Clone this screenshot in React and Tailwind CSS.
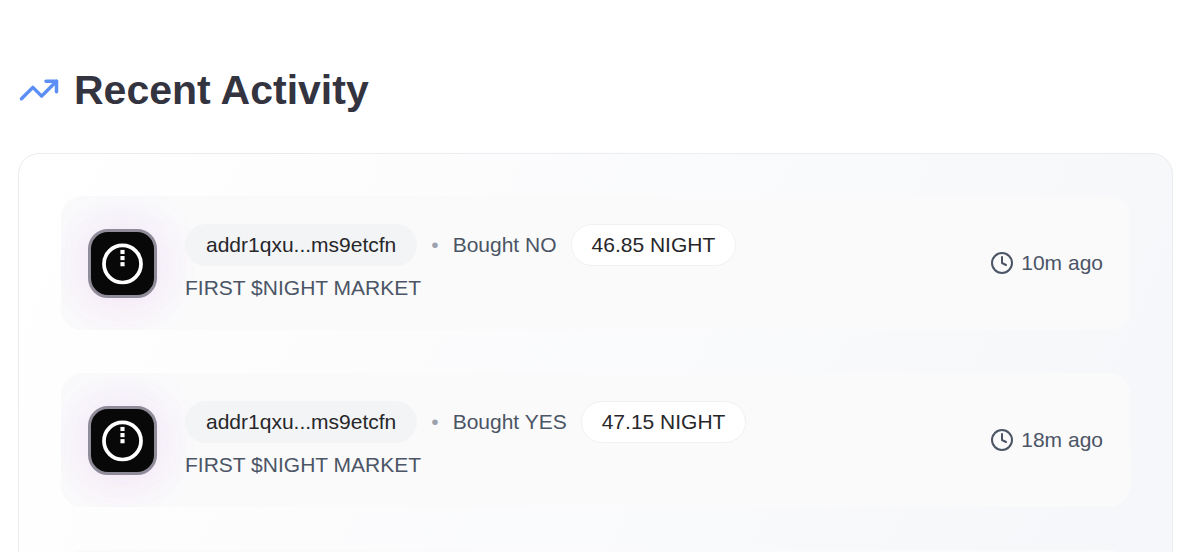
import React from 'react';
import { Clock, TrendingUp } from 'lucide-react';

const activities = [
  { id: 1, address: 'addr1qxu...ms9etcfn', action: 'Bought NO', amount: '46.85 NIGHT', market: 'FIRST $NIGHT MARKET', time: '10m ago' },
  { id: 2, address: 'addr1qxu...ms9etcfn', action: 'Bought YES', amount: '47.15 NIGHT', market: 'FIRST $NIGHT MARKET', time: '18m ago' },
];

const MarketLogo = () => (
  <div className="w-[69px] h-[69px] shrink-0 rounded-[20px] border-3 border-[#8f8b98] bg-[#080808] shadow-[0_-6px_50px_rgba(150,80,230,0.09),0_10px_50px_rgba(220,80,200,0.09)] overflow-hidden">
    <svg viewBox="0 0 64 64" className="w-full h-full" aria-hidden="true">
      <circle cx="32" cy="32.5" r="18.8" fill="none" stroke="#fff" strokeWidth="3.8" />
      <rect x="29.9" y="18.2" width="4.2" height="4.2" fill="#fff" />
      <rect x="29.9" y="24.4" width="4.2" height="4.2" fill="#fff" />
      <rect x="29.9" y="30.6" width="4.2" height="4.2" fill="#fff" />
    </svg>
  </div>
);

const ActivityRow = ({ item }) => (
  <li className="flex items-center justify-between rounded-[21px] bg-[#fafafb] px-[27px] py-7 overflow-hidden">
    <div className="flex items-center gap-7">
      <MarketLogo />
      <div className="flex flex-col gap-2">
        <div className="flex items-center gap-3.5">
          <span className="rounded-full bg-[#f3f4f6] px-[21px] py-[7px] text-[#27272a]">{item.address}</span>
          <span className="text-[#9ca3af]">•</span>
          <span>{item.action}</span>
          <span className="rounded-full bg-white px-5 py-1.5 border border-[#f1f1f4] text-[#27272a]">{item.amount}</span>
        </div>
        <p>{item.market}</p>
      </div>
    </div>
    <div className="flex items-center gap-[7px]">
      <Clock className="w-6 h-6" />
      <span>{item.time}</span>
    </div>
  </li>
);

const App = () => {
  return (
    <main className="h-screen overflow-hidden bg-white pl-[18px] pr-[27px] pt-[62px] font-['Liberation_Sans',Arial,sans-serif]">
      <h2 className="flex items-center gap-3.5 text-[41px] leading-14 font-bold text-[#33343f]">
        <TrendingUp className="w-[42px] h-[42px] text-[#5b8ff5]" />
        Recent Activity
      </h2>

      <section className="mt-[35px] rounded-[21px] border border-[#ebecef] bg-linear-[115deg] from-white to-[#f5f6f9] p-[42px]">
        <ul className="flex flex-col gap-[43px] text-[21px] leading-7 text-[#4b5565]">
          {activities.map((item) => (
            <ActivityRow key={item.id} item={item} />
          ))}
          <li className="h-[134px] rounded-[21px] bg-[#fafafb]" />
        </ul>
      </section>
    </main>
  );
};

export default App;
